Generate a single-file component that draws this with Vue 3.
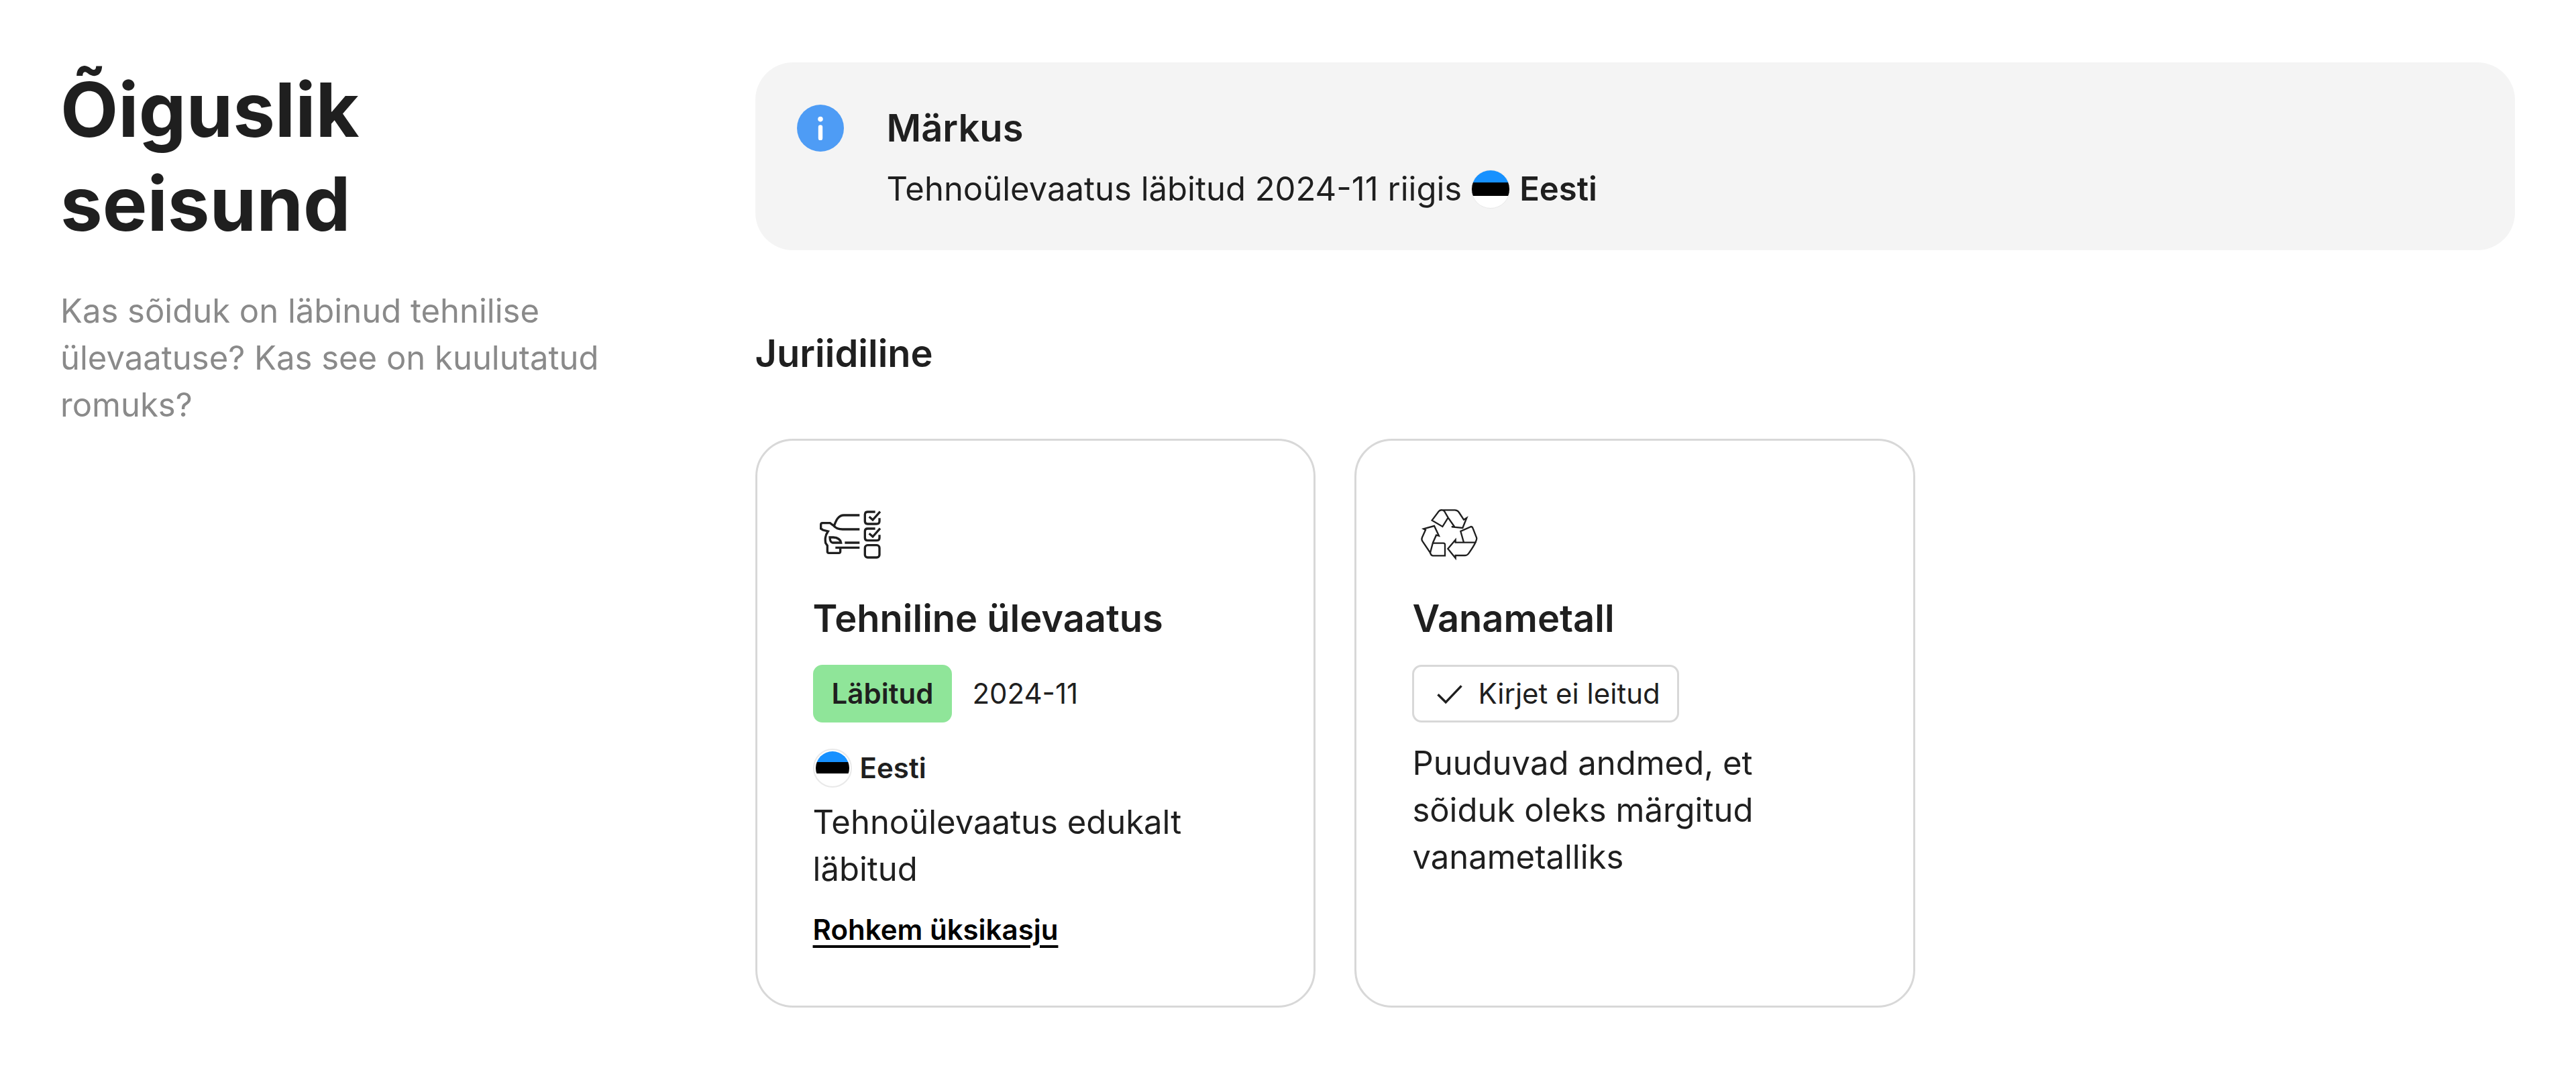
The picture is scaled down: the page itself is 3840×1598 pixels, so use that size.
<script setup>
import { ref } from 'vue'

const country = 'Eesti'
const inspectionDate = '2024-11'

const checks = ref([
  {
    id: 'inspection',
    title: 'Tehniline ülevaatus',
    passed: true,
    status: 'Läbitud',
    date: inspectionDate,
    country,
    text: 'Tehnoülevaatus edukalt läbitud',
    more: 'Rohkem üksikasju'
  },
  {
    id: 'scrap',
    title: 'Vanametall',
    passed: false,
    status: 'Kirjet ei leitud',
    text: 'Puuduvad andmed, et sõiduk oleks märgitud vanametalliks'
  }
])
</script>

<template>
  <section class="legal">
    <header class="intro">
      <h1>Õiguslik seisund</h1>
      <p>Kas sõiduk on läbinud tehnilise ülevaatuse? Kas see on kuulutatud romuks?</p>
    </header>

    <div class="content">
      <aside class="note">
        <svg class="note-icon" viewBox="0 0 24 24" aria-hidden="true">
          <circle cx="12" cy="12" r="12" fill="#4e9cf5" />
          <circle cx="12" cy="7.4" r="1.3" fill="#fff" />
          <path d="M12 11.5v5.6" stroke="#fff" stroke-width="2.2" stroke-linecap="round" />
        </svg>
        <div class="note-body">
          <h2>Märkus</h2>
          <p class="note-text">
            <span>Tehnoülevaatus läbitud {{ inspectionDate }} riigis</span>
            <span class="flag"></span>
            <strong>{{ country }}</strong>
          </p>
        </div>
      </aside>

      <h2 class="group-title">Juriidiline</h2>

      <div class="cards">
        <article v-for="check in checks" :key="check.id" class="card">
          <svg v-if="check.id === 'inspection'" class="card-icon" viewBox="36 -3 330 330" aria-hidden="true">
            <path d="M244 84H174C150 84 140 104 130 132L112 119H78Q71 119 71 126V144L80 150L103 156C88 178 90 194 92 208L100 220V246Q100 253 107 253H151Q158 253 158 246V230" />
            <path d="M130 132C138 143 150 147 168 147H244" />
            <path d="M178 207H244M136 229H244" />
            <path d="M111 183H126C144 184 158 190 161 207H124Q112 206 111 183Z" />
            <path d="M314 69H280Q268 69 268 81V111Q268 123 280 123H320Q333 123 333 111V97M287 91L303 105L336 68" />
            <path d="M314 144H280Q268 144 268 156V185Q268 197 280 197H320Q333 197 333 185V172M287 166L303 180L336 143" />
            <rect x="268" y="218" width="65" height="55" rx="12" />
          </svg>
          <svg v-else class="card-icon thin" viewBox="16 -3 330 330" aria-hidden="true">
            <path d="M151 61H207Q219 61 226 72L247 104L260 96L242 141L193 136L203 132L177 95L160 66Q157 62 151 61Q141 60 135 67L105 107L152 135L177 95" />
            <path d="M67 145L115 132L136 176L124 173L109 207L97 252L62 200Q57 192 61 183L76 150Z" />
            <path d="M109 209H156Q163 209 163 216V265H108Q100 264 97 252" />
            <path d="M176 234L210 194V206H299Q292 222 268 256Q262 264 252 264H210V276Z" />
            <path d="M247 206L233 156L280 135Q286 136 288 143L304 184Q307 190 299 206" />
          </svg>

          <h3>{{ check.title }}</h3>

          <div class="status">
            <span class="badge" :class="{ passed: check.passed }">
              <svg v-if="!check.passed" class="tick" viewBox="0 0 24 24" aria-hidden="true">
                <path d="M4.5 12.5l5 5L19.5 7" />
              </svg>
              {{ check.status }}
            </span>
            <span v-if="check.date">{{ check.date }}</span>
          </div>

          <div v-if="check.country" class="country">
            <span class="flag framed"></span>
            <span>{{ check.country }}</span>
          </div>

          <p>{{ check.text }}</p>
          <a v-if="check.more" class="more" href="#">{{ check.more }}</a>
        </article>
      </div>
    </div>
  </section>
</template>

<style>
body {
  margin: 0;
  background: #fff;
}
</style>

<style scoped>
.legal {
  display: grid;
  grid-template-columns: minmax(0, 23%) minmax(0, 1fr);
  gap: 194px;
  padding: 93px 91px 93px 90px;
  box-sizing: border-box;
  color: #1f1f1f;
  font-family: Inter, 'Liberation Sans', sans-serif;
  font-size: 49px;
  line-height: 70px;
}

h1,
h2,
h3,
p {
  margin: 0;
}

h1 {
  margin-bottom: 56px;
  font-size: 112px;
  line-height: 140px;
  font-weight: 700;
}

h2,
h3 {
  font-size: 56px;
  line-height: 84px;
  font-weight: 600;
}

.intro p {
  color: #8a8a8a;
}

.note {
  display: flex;
  gap: 64px;
  padding: 56px 62px;
  border-radius: 56px;
  background: #f4f4f4;
}

.note-icon {
  flex: none;
  width: 70px;
  height: 70px;
  margin-top: 7px;
}

.note-text {
  display: flex;
  align-items: center;
  gap: 14px;
  margin-top: 14px;
}

.note-text strong {
  font-weight: 600;
}

.flag {
  flex: none;
  width: 58px;
  height: 58px;
  box-sizing: border-box;
  border: 1px solid #e9e9e9;
  border-radius: 50%;
  background: linear-gradient(#1791ff 33%, #000 33% 67%, #fff 67%);
}

.flag.framed {
  padding: 2px;
  border-width: 2px;
  background-clip: content-box;
  background-origin: content-box;
}

.group-title {
  margin: 112px 0 85px;
}

.cards {
  display: grid;
  grid-template-columns: repeat(3, minmax(0, 1fr));
  gap: 58px;
}

.card {
  padding: 82px 83px;
  border: 3px solid #d8d8d8;
  border-radius: 56px;
}

.card-icon {
  display: block;
  width: 110px;
  height: 110px;
  fill: none;
  stroke: #1f1f1f;
  stroke-width: 10;
}

.card-icon.thin {
  stroke-width: 7;
}

.card h3 {
  margin: 31px 0 27px;
}

.status {
  display: flex;
  align-items: center;
  gap: 30px;
  margin-bottom: 26px;
  font-size: 42px;
  line-height: 62px;
}

.badge {
  display: flex;
  align-items: center;
  gap: 14px;
  padding: 9px 25px;
  border: 3px solid #d8d8d8;
  border-radius: 14px;
}

.badge.passed {
  border-color: #8fe599;
  background: #8fe599;
  font-weight: 600;
}

.tick {
  width: 56px;
  height: 56px;
  fill: none;
  stroke: #1f1f1f;
  stroke-width: 1.5;
}

.country {
  display: flex;
  align-items: center;
  gap: 12px;
  margin-bottom: 4px;
  font-size: 42px;
  line-height: 84px;
  font-weight: 600;
}

.more {
  display: block;
  width: fit-content;
  margin-top: 24px;
  color: #000;
  font-size: 42px;
  line-height: 62px;
  font-weight: 600;
  text-decoration-line: underline;
  text-decoration-thickness: 4px;
  text-underline-offset: 8px;
}

@media (max-width: 1600px) {
  .legal,
  .cards {
    grid-template-columns: minmax(0, 1fr);
  }
}
</style>
